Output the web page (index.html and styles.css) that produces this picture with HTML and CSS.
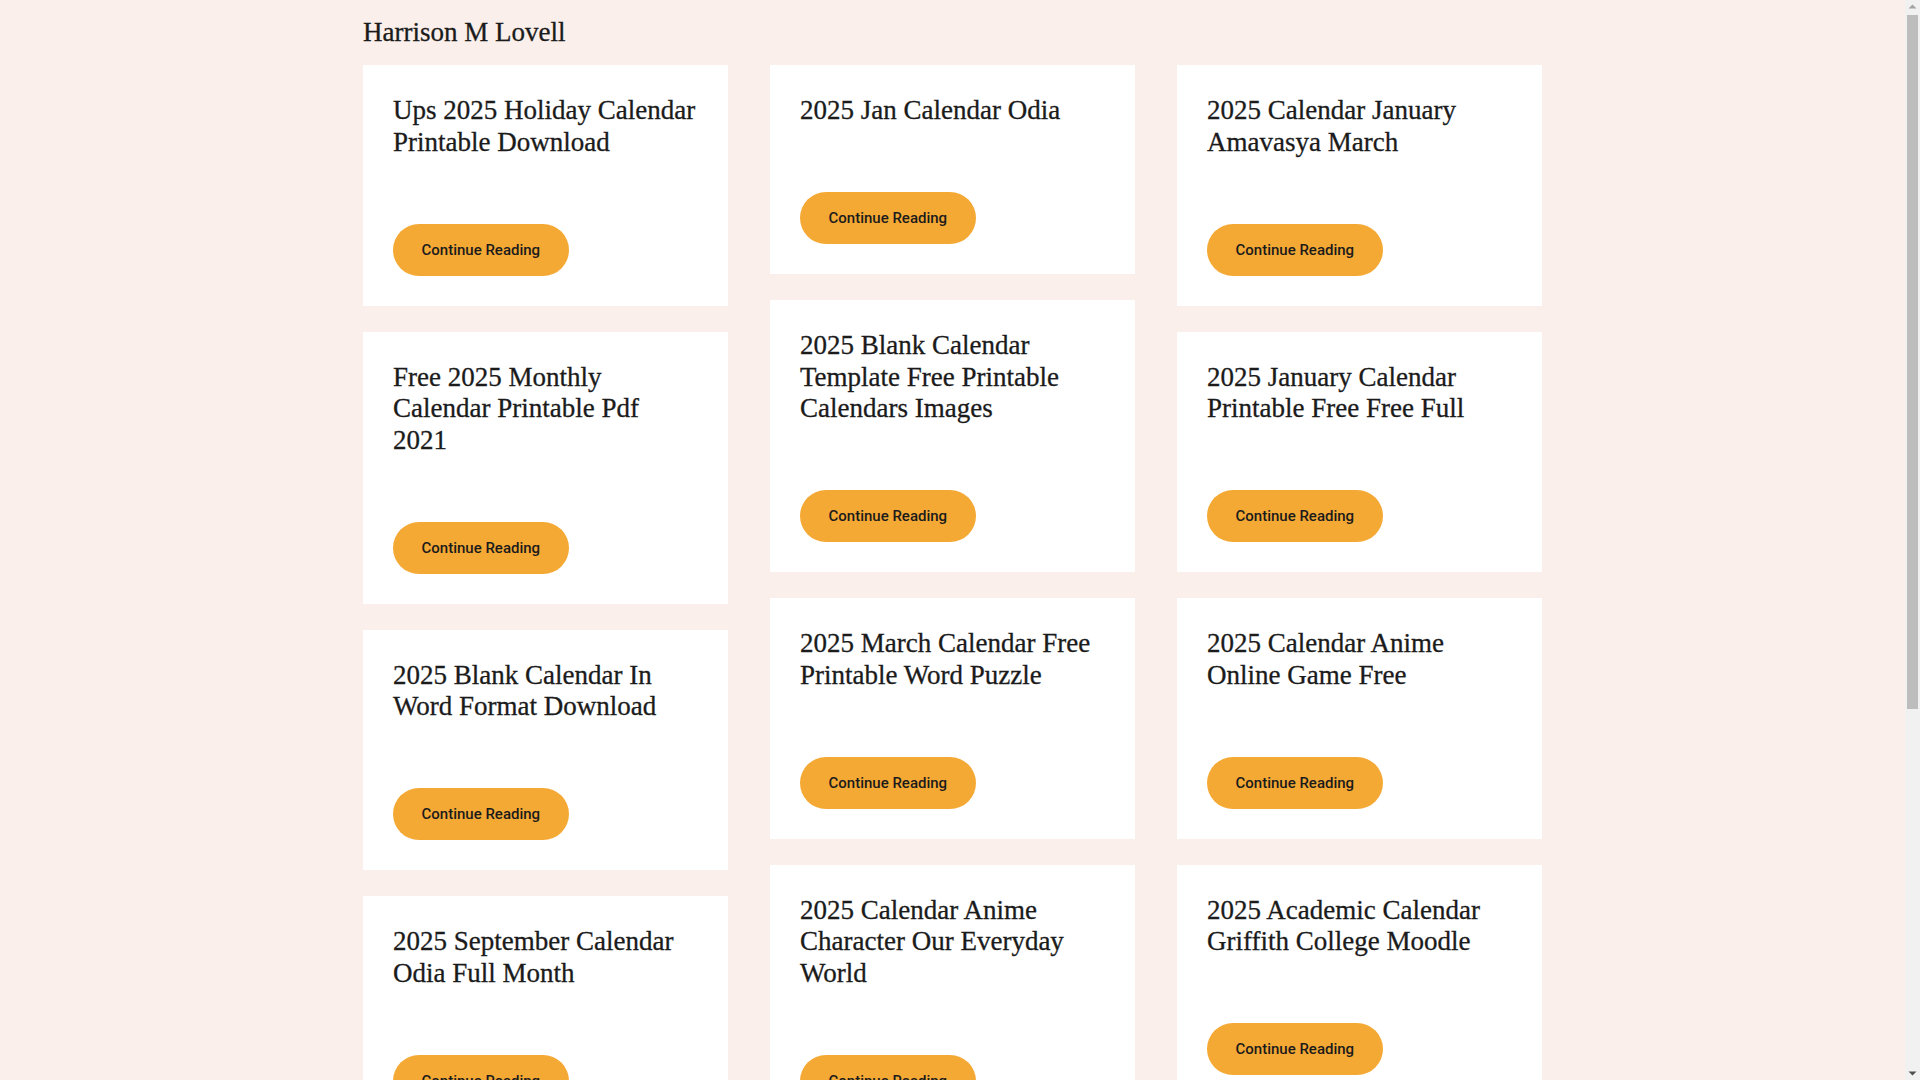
FILE: index.html
```html
<!DOCTYPE html>
<html lang="en">
<head>
<meta charset="utf-8">
<title>Harrison M Lovell</title>
<link rel="stylesheet" href="styles.css">
</head>
<body>
<div class="site">
  <header class="site-header">
    <a class="site-title" href="#">Harrison M Lovell</a>
  </header>
  <main class="grid">
    <div class="col">
      <article class="card">
        <h2 class="card-title">Ups 2025 Holiday Calendar Printable Download</h2>
        <a class="btn" href="#">Continue Reading</a>
      </article>
      <article class="card">
        <h2 class="card-title">Free 2025 Monthly Calendar Printable Pdf 2021</h2>
        <a class="btn" href="#">Continue Reading</a>
      </article>
      <article class="card">
        <h2 class="card-title">2025 Blank Calendar In Word Format Download</h2>
        <a class="btn" href="#">Continue Reading</a>
      </article>
      <article class="card">
        <h2 class="card-title">2025 September Calendar Odia Full Month</h2>
        <a class="btn" href="#">Continue Reading</a>
      </article>
      <article class="card">
        <h2 class="card-title">2025 Calendar Printable Free Monthly Planner</h2>
        <a class="btn" href="#">Continue Reading</a>
      </article>
      <article class="card">
        <h2 class="card-title">2025 Calendar Odia Pdf</h2>
        <a class="btn" href="#">Continue Reading</a>
      </article>
    </div>
    <div class="col">
      <article class="card">
        <h2 class="card-title">2025 Jan Calendar Odia</h2>
        <a class="btn" href="#">Continue Reading</a>
      </article>
      <article class="card">
        <h2 class="card-title">2025 Blank Calendar Template Free Printable Calendars Images</h2>
        <a class="btn" href="#">Continue Reading</a>
      </article>
      <article class="card">
        <h2 class="card-title">2025 March Calendar Free Printable Word Puzzle</h2>
        <a class="btn" href="#">Continue Reading</a>
      </article>
      <article class="card">
        <h2 class="card-title">2025 Calendar Anime Character Our Everyday World</h2>
        <a class="btn" href="#">Continue Reading</a>
      </article>
      <article class="card">
        <h2 class="card-title">2025 Calendar With Week Numbers Excel</h2>
        <a class="btn" href="#">Continue Reading</a>
      </article>
    </div>
    <div class="col">
      <article class="card">
        <h2 class="card-title">2025 Calendar January Amavasya March</h2>
        <a class="btn" href="#">Continue Reading</a>
      </article>
      <article class="card">
        <h2 class="card-title">2025 January Calendar Printable Free Free Full</h2>
        <a class="btn" href="#">Continue Reading</a>
      </article>
      <article class="card">
        <h2 class="card-title">2025 Calendar Anime Online Game Free</h2>
        <a class="btn" href="#">Continue Reading</a>
      </article>
      <article class="card">
        <h2 class="card-title">2025 Academic Calendar Griffith College Moodle</h2>
        <a class="btn" href="#">Continue Reading</a>
      </article>
      <article class="card">
        <h2 class="card-title">2025 February Calendar Printable Free Word</h2>
        <a class="btn" href="#">Continue Reading</a>
      </article>
    </div>
  </main>
</div>
<div class="scrollbar" aria-hidden="true">
  <div class="sb-arrow sb-up">
    <svg width="15" height="15" viewBox="0 0 15 15"><polygon points="3.5,8.5 11.5,8.5 7.5,4.5" fill="#a3a3a3"/></svg>
  </div>
  <div class="sb-track">
    <div class="sb-thumb"></div>
  </div>
  <div class="sb-arrow sb-down">
    <svg width="15" height="15" viewBox="0 0 15 15"><polygon points="3.5,6.5 11.5,6.5 7.5,10.5" fill="#505050"/></svg>
  </div>
</div>
</body>
</html>
```

FILE: styles.css
```css
html, body {
  margin: 0;
  padding: 0;
}

body {
  background: #faefea;
  color: #1b1b1b;
  font-family: "Liberation Serif", "Times New Roman", serif;
  padding-right: 15px;
}

.site {
  width: 1179px;
  margin: 0 auto;
}

.site-header {
  padding-top: 17px;
  height: 48px;
  box-sizing: border-box;
}

.site-title {
  display: block;
  font-size: 27px;
  line-height: 31.5px;
  color: #1b1b1b;
  text-decoration: none;
  font-weight: 400;
  -webkit-text-stroke: 0.3px #1b1b1b;
}

.grid {
  display: grid;
  grid-template-columns: repeat(3, 365px);
  column-gap: 42px;
  align-items: start;
  margin-top: 17px;
}

.col {
  display: flex;
  flex-direction: column;
  gap: 26px;
}

.card {
  background: #ffffff;
  padding: 30px;
  display: flex;
  flex-direction: column;
  align-items: flex-start;
}

.card-title {
  margin: 0 0 65.5px 0;
  font-size: 27px;
  line-height: 31.5px;
  font-weight: 400;
  color: #1b1b1b;
  -webkit-text-stroke: 0.3px #1b1b1b;
}

.btn {
  display: inline-flex;
  align-items: center;
  justify-content: center;
  height: 52px;
  padding: 0 28.5px;
  box-sizing: border-box;
  border-radius: 26px;
  background: #f5a935;
  color: #1b1b1b;
  text-decoration: none;
  font-family: Roboto, Inter, "Liberation Sans", sans-serif;
  font-size: 15px;
  font-weight: 500;
}

/* browser scrollbar as it appears in the captured window */
.scrollbar {
  position: fixed;
  top: 0;
  right: 0;
  width: 15px;
  height: 100vh;
  background: #f1f1f1;
  display: flex;
  flex-direction: column;
}

.sb-arrow {
  height: 15px;
  flex: none;
}

.sb-arrow svg {
  display: block;
}

.sb-track {
  flex: 1;
  display: flex;
  flex-direction: column;
  padding: 0 2px;
}

.sb-thumb {
  height: 694px;
  background: #bdbdbd;
}
```
